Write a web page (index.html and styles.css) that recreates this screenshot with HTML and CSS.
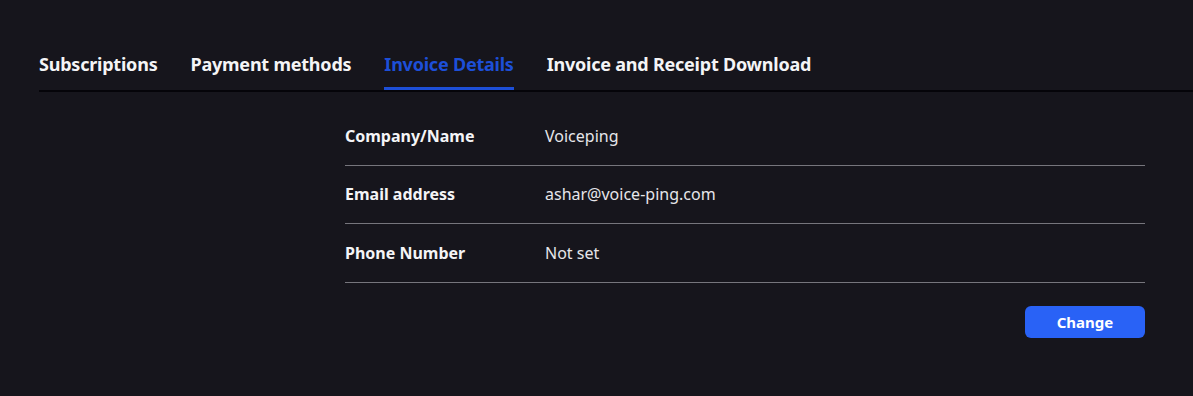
FILE: index.html
```html
<!DOCTYPE html>
<html lang="en">
<head>
<meta charset="utf-8">
<link rel="stylesheet" href="styles.css">
</head>
<body>
<div class="page">
  <nav class="tabs">
    <div class="tab">Subscriptions</div>
    <div class="tab">Payment methods</div>
    <div class="tab active">Invoice Details</div>
    <div class="tab">Invoice and Receipt Download</div>
  </nav>
  <section class="details">
    <div class="row"><div class="label">Company/Name</div><div class="value">Voiceping</div></div>
    <div class="row"><div class="label">Email address</div><div class="value">ashar@voice-ping.com</div></div>
    <div class="row"><div class="label">Phone Number</div><div class="value">Not set</div></div>
    <div class="actions"><button class="btn">Change</button></div>
  </section>
</div>
</body>
</html>
```
FILE: styles.css
```css
* { box-sizing: border-box; }
html, body { margin: 0; padding: 0; }
body {
  background: #16151c;
  color: #f2f2f4;
  font-family: "Noto Sans", "Open Sans", sans-serif;
  width: 1193px;
  height: 396px;
  overflow: hidden;
}
.page {
  padding: 50px 0 0 39px;
}
.tabs {
  display: flex;
  gap: 33px;
  border-bottom: 2px solid #050409;
  height: 42px;
}
.tab {
  font-size: 18px;
  font-weight: 700;
  line-height: 28px;
  height: 40px;
  border-bottom: 3px solid transparent;
  letter-spacing: -0.22px;
  color: #f4f4f6;
}
.tab.active {
  color: #1d4fd8;
  border-bottom-color: #1d4fd8;
}
.details {
  width: 800px;
  margin: 15px 48px 0 auto;
}
.row {
  display: flex;
  align-items: center;
  height: 58.5px;
  border-bottom: 1px solid #76757c;
  font-size: 16px;
}
.label {
  width: 200px;
  font-weight: 700;
  color: #f4f4f6;
}
.value {
  color: #e6e6ea;
}
.actions {
  display: flex;
  justify-content: flex-end;
  padding-top: 23px;
}
.btn {
  width: 120px;
  height: 32px;
  border: 0;
  border-radius: 6px;
  background: #2962f6;
  color: #fff;
  font-family: inherit;
  font-size: 15px;
  font-weight: 700;
}
```
